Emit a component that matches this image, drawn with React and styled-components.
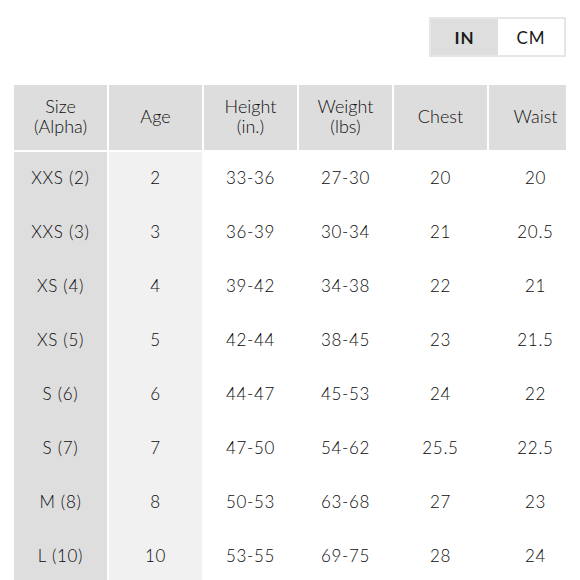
import React from 'react';
import styled, { createGlobalStyle } from 'styled-components';

const GlobalStyle = createGlobalStyle`
  html, body {
    margin: 0;
    padding: 0;
    background: #fff;
  }
  body {
    font-family: Lato, 'Open Sans', sans-serif;
    color: #222;
  }
`;

const Page = styled.div`
  width: 580px;
  height: 580px;
  overflow: hidden;
  padding: 17px 14px 0 14px;
  box-sizing: border-box;
  display: flex;
  flex-direction: column;
  gap: 28px;
`;

const Toolbar = styled.div`
  display: flex;
  justify-content: flex-end;
`;

const Toggle = styled.div`
  display: flex;
  border: 2px solid #e6e6e6;
  height: 40px;
  box-sizing: border-box;
`;

const ToggleButton = styled.button`
  width: ${p => (p.$first ? 67 : 66)}px;
  border: none;
  margin: 0;
  padding: 0;
  font-family: inherit;
  font-size: 17px;
  font-weight: ${p => (p.$active ? 700 : 400)};
  letter-spacing: 1px;
  color: #1a1a1a;
  background: ${p => (p.$active ? '#dedede' : '#fff')};
  cursor: pointer;
`;

const TableClip = styled.div`
  width: 552px;
  overflow: hidden;
`;

const Grid = styled.div`
  display: grid;
  grid-template-columns: repeat(6, 93px);
  grid-template-rows: 67px;
  grid-auto-rows: 54px;
  column-gap: 2px;
  width: 568px;
`;

const HeaderCell = styled.div`
  background: #dddddd;
  margin-bottom: 2px;
  padding-bottom: 3px;
  box-sizing: border-box;
  display: flex;
  align-items: center;
  justify-content: center;
  text-align: center;
  font-size: 18px;
  font-weight: 300;
  line-height: 20px;
  color: #111;
`;

const Cell = styled.div`
  background: ${p => (p.$col === 0 ? '#dedede' : p.$col === 1 ? '#f1f1f1' : '#fff')};
  display: flex;
  align-items: center;
  justify-content: center;
  padding-bottom: 4px;
  box-sizing: border-box;
  font-size: 17px;
  font-weight: 300;
  letter-spacing: 0.7px;
  color: #0a0a0a;
`;

const headers = [
  ['Size', '(Alpha)'],
  ['Age'],
  ['Height', '(in.)'],
  ['Weight', '(lbs)'],
  ['Chest'],
  ['Waist'],
];

const rows = [
  ['XXS (2)', '2', '33-36', '27-30', '20', '20'],
  ['XXS (3)', '3', '36-39', '30-34', '21', '20.5'],
  ['XS (4)', '4', '39-42', '34-38', '22', '21'],
  ['XS (5)', '5', '42-44', '38-45', '23', '21.5'],
  ['S (6)', '6', '44-47', '45-53', '24', '22'],
  ['S (7)', '7', '47-50', '54-62', '25.5', '22.5'],
  ['M (8)', '8', '50-53', '63-68', '27', '23'],
  ['L (10)', '10', '53-55', '69-75', '28', '24'],
];

export default function App() {
  return (
    <Page>
      <GlobalStyle />
      <Toolbar>
        <Toggle>
          <ToggleButton $active $first>IN</ToggleButton>
          <ToggleButton>CM</ToggleButton>
        </Toggle>
      </Toolbar>
      <TableClip>
        <Grid>
          {headers.map((lines, i) => (
            <HeaderCell key={i}>
              {lines.map((l, j) => (
                <React.Fragment key={j}>
                  {j > 0 && <br />}
                  {l}
                </React.Fragment>
              ))}
            </HeaderCell>
          ))}
          {rows.map((row, r) =>
            row.map((val, c) => (
              <Cell key={`${r}-${c}`} $col={c}>
                {val}
              </Cell>
            ))
          )}
        </Grid>
      </TableClip>
    </Page>
  );
}
